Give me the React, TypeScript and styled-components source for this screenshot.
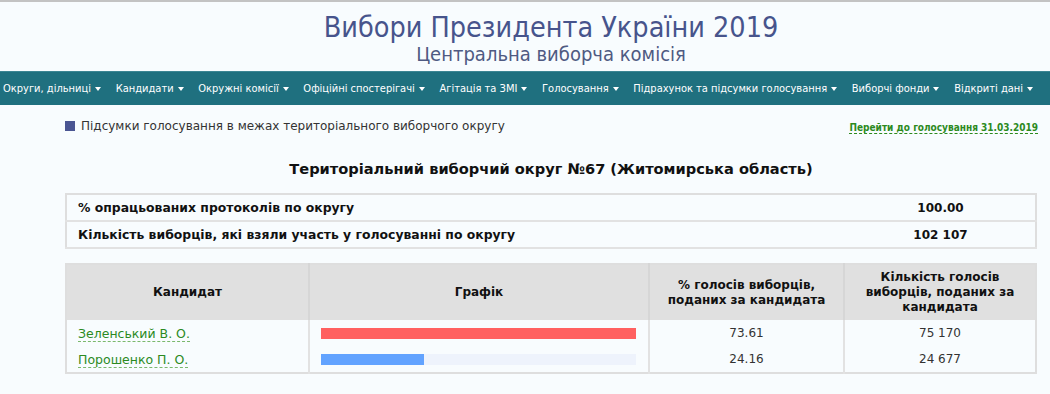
import React from "react";
import styled, { createGlobalStyle } from "styled-components";

const Global = createGlobalStyle`
  html, body { margin: 0; padding: 0; }
  body {
    background: #f8fcfe;
    border-top: 2px solid #c3c3c3;
    font-family: "DejaVu Sans", Verdana, sans-serif;
    color: #222;
  }
`;

const Header = styled.header`
  display: flex;
  flex-direction: column;
  align-items: center;
  padding: 10px 13px 0 65px;
  height: 59px;
`;

const Title = styled.h1`
  margin: 0;
  font-family: "DejaVu Sans Condensed", "DejaVu Sans", sans-serif;
  font-stretch: condensed;
  font-weight: normal;
  font-size: 28.5px;
  line-height: 31px;
  color: #47548c;
`;

const Subtitle = styled.h2`
  margin: 0;
  font-family: "DejaVu Sans Condensed", "DejaVu Sans", sans-serif;
  font-stretch: condensed;
  font-weight: normal;
  font-size: 20px;
  line-height: 22px;
  color: #4f5a82;
`;

const Nav = styled.nav`
  display: flex;
  align-items: center;
  height: 33px;
  background: #1f707f;
  border-top: 1px solid #3b8593;
  padding-left: 3px;
  gap: 14.7px;
`;

const NavItem = styled.span`
  font-family: "DejaVu Sans Condensed", "DejaVu Sans", sans-serif;
  font-stretch: condensed;
  font-size: 11px;
  color: #ffffff;
  white-space: nowrap;
  display: flex;
  align-items: center;
  gap: 4px;
`;

const Caret = styled.span`
  width: 0;
  height: 0;
  border-left: 3px solid transparent;
  border-right: 3px solid transparent;
  border-top: 4px solid #ffffff;
`;

const Content = styled.main`
  padding: 14px 13px 0 65px;
`;

const SectionBar = styled.div`
  display: flex;
  align-items: center;
  justify-content: space-between;
  height: 14px;
`;

const SectionTitle = styled.div`
  display: flex;
  align-items: center;
  gap: 6px;
  font-size: 12px;
  color: #333;
`;

const Square = styled.span`
  width: 10px;
  height: 10px;
  background: #4a5592;
`;

const GoLink = styled.a`
  font-family: "DejaVu Sans Condensed", "DejaVu Sans", sans-serif;
  font-stretch: condensed;
  font-size: 10px;
  font-weight: bold;
  color: #2c8a1e;
  text-decoration: none;
  border-bottom: 1px dashed #2c8a1e;
  margin-top: 4px;
  margin-right: -1px;
`;

const Heading = styled.h3`
  margin: 26px 0 0;
  text-align: center;
  font-size: 14.6px;
  line-height: 20px;
  font-weight: bold;
  color: #111;
`;

const Table = styled.table<{ $top: number }>`
  width: 100%;
  table-layout: fixed;
  border-collapse: collapse;
  margin-top: ${(p) => p.$top}px;
  border: 2px solid #dedede;
  font-size: 12px;
`;

const Col = styled.col<{ $w?: number }>`
  width: ${(p) => (p.$w ? `${p.$w}px` : "auto")};
`;

const Label = styled.td`
  height: 25px;
  padding: 0 0 0 11px;
  font-size: 12.4px;
  font-weight: bold;
  color: #111;
  border-bottom: 2px solid #e2e2e2;
`;

const Value = styled.td`
  height: 25px;
  padding: 0;
  text-align: center;
  font-weight: bold;
  color: #111;
  border-bottom: 2px solid #e2e2e2;
`;

const Th = styled.th`
  background: #e0e0e0;
  height: 55px;
  padding: 0 8px;
  font-weight: bold;
  color: #111;
  border-right: 2px solid #d6d6d6;
  line-height: 15px;
  &:last-child { border-right: none; }
`;

const Td = styled.td<{ $center?: boolean }>`
  height: 26px;
  padding: 0 12px 0 ${(p) => (p.$center ? 12 : 11)}px;
  color: #333;
  text-align: ${(p) => (p.$center ? "center" : "left")};
  border-right: 2px solid #e2e2e2;
  &:last-child { border-right: none; }
`;

const NameLink = styled.a`
  font-size: 12.5px;
  color: #2b8a1f;
  text-decoration: none;
  border-bottom: 1px dashed #7ab86c;
`;

const Track = styled.div`
  height: 11px;
  background: #eef3fc;
`;

const Fill = styled.div<{ $color: string }>`
  height: 100%;
  background: ${(p) => p.$color};
`;

const navItems = [
  "Округи, дільниці",
  "Кандидати",
  "Окружні комісії",
  "Офіційні спостерігачі",
  "Агітація та ЗМІ",
  "Голосування",
  "Підрахунок та підсумки голосування",
  "Виборчі фонди",
  "Відкриті дані",
];

const candidates = [
  { name: "Зеленський В. О.", pct: 73.61, pctText: "73.61", votes: "75 170", color: "#ff6060" },
  { name: "Порошенко П. О.", pct: 24.16, pctText: "24.16", votes: "24 677", color: "#62a3ff" },
];

export default function App() {
  const max = Math.max(...candidates.map((c) => c.pct));
  return (
    <>
      <Global />
      <Header>
        <Title>Вибори Президента України 2019</Title>
        <Subtitle>Центральна виборча комісія</Subtitle>
      </Header>
      <Nav>
        {navItems.map((n) => (
          <NavItem key={n}>
            {n}
            <Caret />
          </NavItem>
        ))}
      </Nav>
      <Content>
        <SectionBar>
          <SectionTitle>
            <Square />
            Підсумки голосування в межах територіального виборчого округу
          </SectionTitle>
          <GoLink href="#">Перейти до голосування 31.03.2019</GoLink>
        </SectionBar>
        <Heading>Територіальний виборчий округ №67 (Житомирська область)</Heading>
        <Table $top={14}>
          <colgroup>
            <Col />
            <Col $w={190} />
          </colgroup>
          <tbody>
            <tr>
              <Label>% опрацьованих протоколів по округу</Label>
              <Value>100.00</Value>
            </tr>
            <tr>
              <Label>Кількість виборців, які взяли участь у голосуванні по округу</Label>
              <Value>102 107</Value>
            </tr>
          </tbody>
        </Table>
        <Table $top={14}>
          <colgroup>
            <Col $w={243} />
            <Col $w={340} />
            <Col $w={195} />
            <Col />
          </colgroup>
          <thead>
            <tr>
              <Th>Кандидат</Th>
              <Th>Графік</Th>
              <Th>% голосів виборців, поданих за кандидата</Th>
              <Th>Кількість голосів виборців, поданих за кандидата</Th>
            </tr>
          </thead>
          <tbody>
            {candidates.map((c) => (
              <tr key={c.name}>
                <Td>
                  <NameLink href="#">{c.name}</NameLink>
                </Td>
                <Td>
                  <Track>
                    <Fill $color={c.color} style={{ width: `${(c.pct / max) * 100}%` }} />
                  </Track>
                </Td>
                <Td $center>{c.pctText}</Td>
                <Td $center>{c.votes}</Td>
              </tr>
            ))}
          </tbody>
        </Table>
      </Content>
    </>
  );
}
